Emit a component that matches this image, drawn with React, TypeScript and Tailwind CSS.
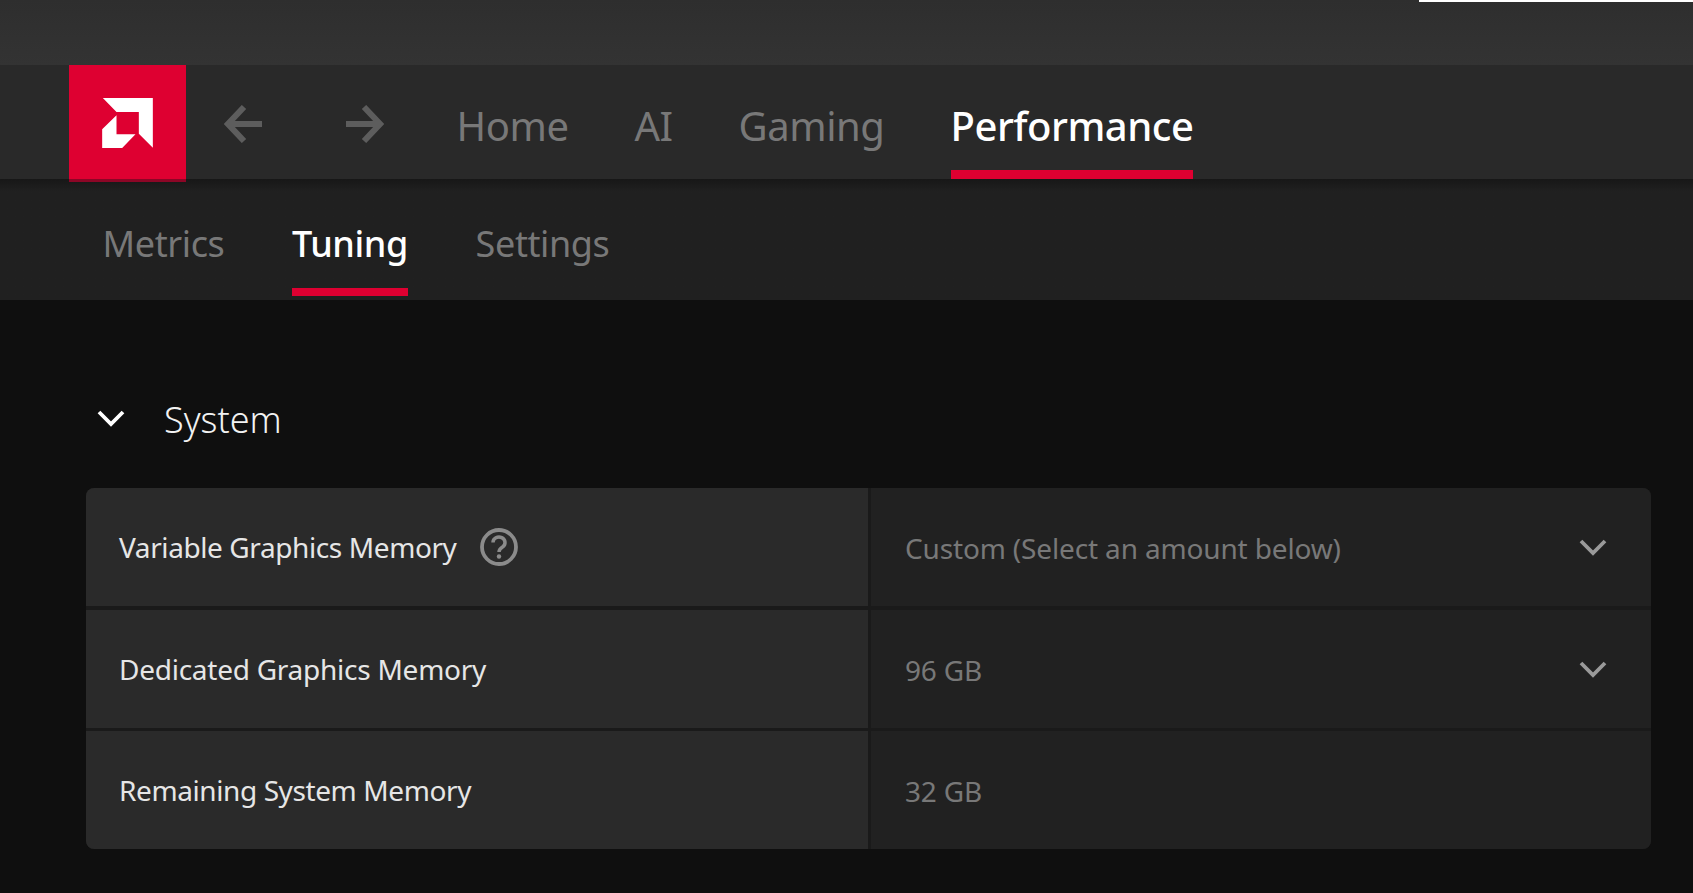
const topTabs = [
  { label: 'Home', active: false, width: 'w-[109px]' },
  { label: 'AI', active: false, width: 'w-[37px]' },
  { label: 'Gaming', active: false, width: 'w-[143px]' },
  { label: 'Performance', active: true, width: 'w-[242px]' },
];

const subTabs = [
  { label: 'Metrics', active: false, width: 'w-[119px]' },
  { label: 'Tuning', active: true, width: 'w-[116px]' },
  { label: 'Settings', active: false, width: 'w-[131px]' },
];

const rows = [
  { label: 'Variable Graphics Memory', value: 'Custom (Select an amount below)', help: true, select: true, tracking: 'tracking-[-0.4px]' },
  { label: 'Dedicated Graphics Memory', value: '96 GB', help: false, select: true, tracking: 'tracking-[-0.25px]' },
  { label: 'Remaining System Memory', value: '32 GB', help: false, select: false, tracking: 'tracking-[-0.4px]' },
];

function AmdLogo() {
  return (
    <svg viewBox="125 113 152 150" className="h-[50px] w-[51px]">
      <path fill="#fff" d="M127 113H277V262L235 220V155H168Z" />
      <path fill="#fff" d="M168 165L125 207V263H185L225 222H168Z" />
    </svg>
  );
}

function Arrow({ back }: { back?: boolean }) {
  return (
    <svg viewBox="0 0 38 38" className="h-[38px] w-[38px]" fill="none" stroke="#5d5d5d" strokeWidth="6">
      {back ? <path d="M20 2L4 19L20 36M4 19H38" /> : <path d="M18 2L34 19L18 36M34 19H0" />}
    </svg>
  );
}

function Chevron({ className }: { className: string }) {
  return (
    <svg viewBox="0 0 28 18" className={`h-[18px] w-[28px] ${className}`} fill="none" stroke="currentColor" strokeWidth="3.800">
      <path d="M2 3L14 15L26 3" />
    </svg>
  );
}

function HelpIcon() {
  return (
    <svg viewBox="0 0 38 38" className="ml-[23px] h-[38px] w-[38px]" fill="none">
      <circle cx="19" cy="19" r="17" stroke="#8b8b8b" strokeWidth="3.800" />
      <path d="M13 14.500a6 5.500 0 1 1 9.500 4.500c-2.400 1.500-3.500 2.500-3.500 5" stroke="#8b8b8b" strokeWidth="3.500" />
      <circle cx="19" cy="28.500" r="2.200" fill="#8b8b8b" />
    </svg>
  );
}

export default function App() {
  return (
    <div className="flex h-[893px] w-[1693px] flex-col overflow-hidden bg-[#0f0f0f] font-['Noto_Sans',sans-serif]">
      {/* title strip */}
      <div className="flex h-[65px] justify-end bg-gradient-to-b from-[#2e2e2e] to-[#333333]">
        <div className="h-[2px] w-[274px] bg-white" />
      </div>

      {/* main nav */}
      <div className="z-10 flex h-[114px] items-stretch bg-[#292929] pl-[69px]">
        <div className="relative flex w-[117px] items-center justify-center bg-[#de0031] pt-[1px]">
          <AmdLogo />
          <div className="absolute inset-x-0 -bottom-[3px] h-[3px] bg-[#8c0626]" />
        </div>
        <div className="ml-[38px] flex items-center gap-[84px] pt-[3px]">
          <Arrow back />
          <Arrow />
        </div>
        <div className="ml-[74px] flex gap-[68px]">
          {topTabs.map((tab) => (
            <div
              key={tab.label}
              className={`flex items-center justify-center whitespace-nowrap border-b-[9px] pt-[17px] text-[40px] ${tab.width} ${
                tab.active ? 'border-[#de0031] font-medium tracking-[-0.5px] text-white' : 'border-transparent tracking-[-0.45px] text-[#787878]'
              }`}
            >
              {tab.label}
            </div>
          ))}
        </div>
      </div>

      {/* sub nav */}
      <div className="flex h-[121px] gap-[69px] bg-gradient-to-b from-[#171717] from-0% to-[#202020] to-10% pl-[104px]">
        {subTabs.map((tab) => (
          <div
            key={tab.label}
            className={`mb-[4px] flex items-center justify-center whitespace-nowrap border-b-[8px] pt-[21px] text-[36px] tracking-[-0.4px] ${tab.width} ${
              tab.active ? 'border-[#de0031] font-medium text-white' : 'border-transparent text-[#787878]'
            }`}
          >
            {tab.label}
          </div>
        ))}
      </div>

      {/* content */}
      <div className="flex flex-col pl-[86px] pr-[42px]">
        <div className="flex h-[188px] items-center pl-[11px] pt-[52px] text-white">
          <Chevron className="mb-[4px] text-white" />
          <span className="ml-[39px] text-[36px] font-light text-[#f2f2f2]">System</span>
        </div>
        <div className="flex flex-col gap-[3.5px] overflow-hidden rounded-[8px] bg-[#1a1a1a]">
          {rows.map((row) => (
            <div key={row.label} className="flex h-[118px] gap-[3px]">
              <div className={`flex w-[782px] items-center bg-[#2a2a2a] pl-[33px] text-[28px] text-[#e6e6e6] ${row.tracking}`}>
                <span>{row.label}</span>
                {row.help && <HelpIcon />}
              </div>
              <div className="flex flex-1 items-center justify-between bg-[#212121] pl-[34px] pr-[44px] text-[28px] tracking-[-0.15px] text-[#787878]">
                <span className="pt-[2px]">{row.value}</span>
                {row.select && <Chevron className="text-[#9a9a9a]" />}
              </div>
            </div>
          ))}
        </div>
      </div>
    </div>
  );
}
